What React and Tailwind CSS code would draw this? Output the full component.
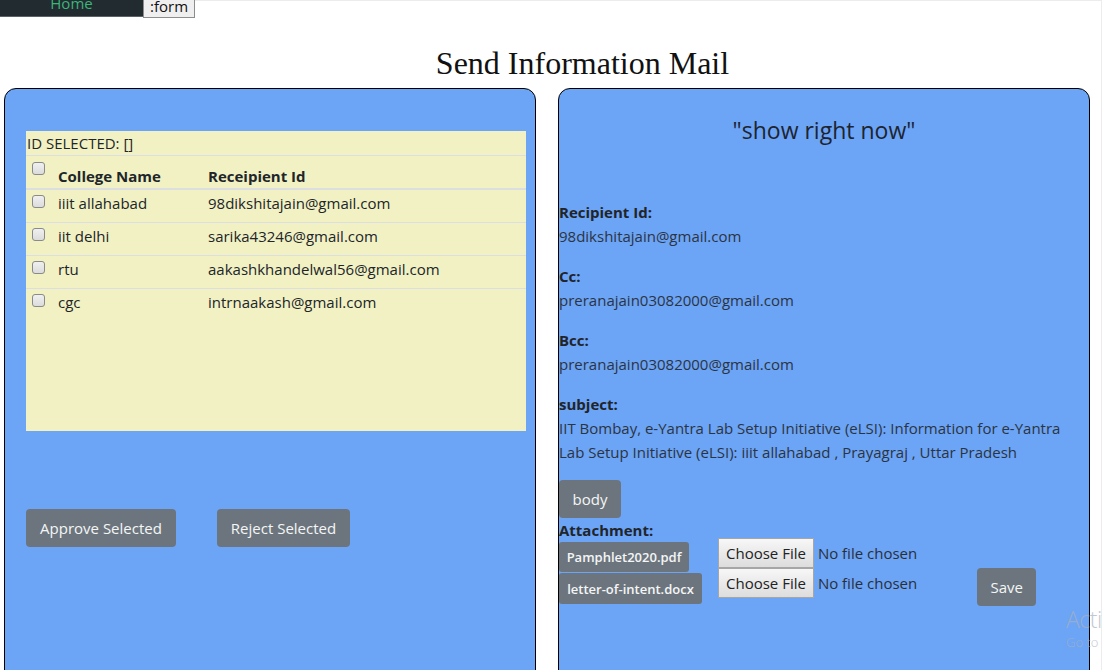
import React from "react";

const font = { fontFamily: '"Open Sans", "Noto Sans", sans-serif' };

function Check() {
  return (
    <span className="block w-[13px] h-[13px] rounded-[3px] border border-[#8a8a8a] bg-gradient-to-b from-[#f0f0f0] to-[#dcdcdc]" />
  );
}

function FileInput() {
  return (
    <div className="flex items-center h-[30px]">
      <span className="h-[30px] px-[7px] flex items-center border border-[#a6a6a6] bg-gradient-to-b from-[#f7f7f7] to-[#dddddd] text-[15px] text-[#222]">
        Choose File
      </span>
      <span className="ml-[4px] text-[15px] text-[#2a2f36]">No file chosen</span>
    </div>
  );
}

const rows = [
  ["iiit allahabad", "98dikshitajain@gmail.com"],
  ["iit delhi", "sarika43246@gmail.com"],
  ["rtu", "aakashkhandelwal56@gmail.com"],
  ["cgc", "intrnaakash@gmail.com"],
];

export default function App() {
  return (
    <div
      className="relative w-[1102px] h-[670px] overflow-hidden bg-white text-[#212529]"
      style={font}
    >
      <div className="border-t border-r border-[#ececec] h-full">
        {/* top nav */}
        <div className="flex -mt-[11px] h-[28px]">
          <div className="w-[143px] h-[27px] bg-[#222b2f] border-b border-[#5a6268] flex items-center justify-center text-[#3bb57a] text-[15px]">
            Home
          </div>
          <div className="h-[28px] px-[6px] flex items-end pb-[3px] bg-[#efefef] border border-[#8d8d8d] text-[15px] text-[#111] leading-none">
            :form
          </div>
        </div>

        {/* title */}
        <h1
          className="pl-[64px] text-center text-[32px] leading-[37px] mt-[27px] text-[#111]"
          style={{ fontFamily: '"Liberation Serif", "Times New Roman", serif' }}
        >
          Send Information Mail
        </h1>

        <div className="flex gap-[22px] pl-[4px] mt-[6px]">
          {/* left panel */}
          <div className="w-[532px] h-[640px] shrink-0 bg-[#6ca4f6] border border-black rounded-[12px] pt-[42px] pl-[21px]">
            <div className="w-[500px] h-[300px] bg-[#f1f1c4] text-[15px] leading-[24px]">
              <div className="pl-[1px] border-b border-[#dbdfe2]">ID SELECTED: []</div>
              <div className="flex border-b-2 border-[#dbdfe2] h-[34px]">
                <div className="w-[27px] pl-[6px] pt-[6px]">
                  <Check />
                </div>
                <div className="w-[151px] pl-[5px] pt-[8px] font-bold">College Name</div>
                <div className="pl-[4px] pt-[8px] font-bold">Receipient Id</div>
              </div>
              {rows.map((r, i) => (
                <div
                  key={i}
                  className={
                    "flex h-[33px] " + (i < rows.length - 1 ? "border-b border-[#dbdfe2]" : "")
                  }
                >
                  <div className="w-[27px] pl-[6px] pt-[5px]">
                    <Check />
                  </div>
                  <div className="w-[151px] pl-[5px] pt-[1px]">{r[0]}</div>
                  <div className="pl-[4px] pt-[1px]">{r[1]}</div>
                </div>
              ))}
            </div>
            <div className="flex gap-[41px] mt-[78px]">
              <button className="h-[38px] px-[12px] rounded-[4px] bg-[#6c757d] text-[#f4f5f6] text-[15px] w-[150px]">
                Approve Selected
              </button>
              <button className="h-[38px] px-[12px] rounded-[4px] bg-[#6c757d] text-[#f4f5f6] text-[15px] w-[133px]">
                Reject Selected
              </button>
            </div>
          </div>

          {/* right panel */}
          <div className="w-[532px] h-[640px] shrink-0 bg-[#6ca4f6] border border-black rounded-[12px] text-[15px] leading-[24px]">
            <div className="text-center text-[23px] leading-[28px] mt-[27px] text-[#1d2430]">
              "show right now"
            </div>
            <div className="mt-[56px] flex flex-col gap-[16px]">
              <div>
                <div className="font-bold">Recipient Id:</div>
                <div className="text-[#2b3442]">98dikshitajain@gmail.com</div>
              </div>
              <div>
                <div className="font-bold">Cc:</div>
                <div className="text-[#2b3442]">preranajain03082000@gmail.com</div>
              </div>
              <div>
                <div className="font-bold">Bcc:</div>
                <div className="text-[#2b3442]">preranajain03082000@gmail.com</div>
              </div>
              <div>
                <div className="font-bold">subject:</div>
                <div className="text-[#2b3442]">
                  IIT Bombay, e-Yantra Lab Setup Initiative (eLSI): Information for e-Yantra
                  <br />
                  Lab Setup Initiative (eLSI): iiit allahabad , Prayagraj , Uttar Pradesh
                </div>
              </div>
            </div>
            <button className="mt-[16px] h-[38px] w-[62px] rounded-[4px] bg-[#6c757d] text-[#f4f5f6] text-[15px]">
              body
            </button>
            <div className="font-bold">Attachment:</div>
            <div className="flex items-start -mt-[4px]">
              <div className="flex flex-col gap-[1px] mt-[4px]">
                <div className="h-[30px] w-[130px] flex items-center justify-center rounded-[3px] bg-[#6c757d] text-[#f4f5f6] text-[13px] font-semibold">
                  Pamphlet2020.pdf
                </div>
                <div className="h-[31px] w-[143px] flex items-center justify-center rounded-[3px] bg-[#6c757d] text-[#f4f5f6] text-[13px] font-semibold">
                  letter-of-intent.docx
                </div>
              </div>
              <div className="ml-[16px] flex flex-col">
                <FileInput />
                <FileInput />
              </div>
              <button className="ml-[60px] mt-[30px] h-[38px] w-[59px] rounded-[4px] bg-[#6c757d] text-[#f4f5f6] text-[15px]">
                Save
              </button>
            </div>
          </div>
        </div>
      </div>

      {/* windows watermark */}
      <div className="absolute left-[1066px] top-[604px] text-[#a9b2bd] opacity-70 whitespace-nowrap pointer-events-none">
        <div className="text-[23px] leading-[30px] font-light tracking-[-0.5px]">Activate Windows</div>
        <div className="text-[13px] leading-[16px] font-light">Go to Settings to activate Windows.</div>
      </div>
    </div>
  );
}
